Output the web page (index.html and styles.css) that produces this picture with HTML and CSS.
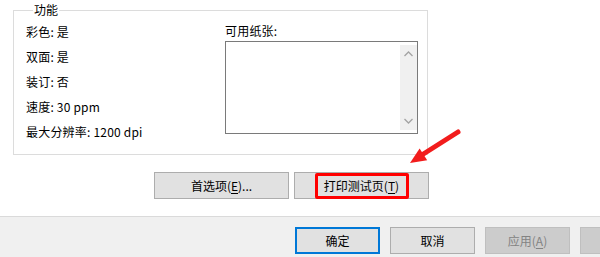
FILE: index.html
```html
<!DOCTYPE html>
<html lang="zh-CN">
<head>
    <meta charset="UTF-8">
    <title>打印机属性</title>
    <link rel="stylesheet" href="styles.css">
</head>
<body>
    <div class="page">
        <div class="content">
            <fieldset class="features">
                <legend>功能</legend>
                <div class="cols">
                    <div class="specs">
                        <div class="row">彩色: 是</div>
                        <div class="row">双面: 是</div>
                        <div class="row">装订: 否</div>
                        <div class="row">速度: 30 ppm</div>
                        <div class="row">最大分辨率: 1200 dpi</div>
                    </div>
                    <div class="paper">
                        <div class="row">可用纸张:</div>
                        <div class="listbox">
                            <div class="scrollbar">
                                <svg width="17" height="12" viewBox="0 0 17 12"><path d="M4.5 8 L8.5 4 L12.5 8" fill="none" stroke="#a3a3a3" stroke-width="1.3"/></svg>
                                <svg width="17" height="12" viewBox="0 0 17 12"><path d="M4.5 4 L8.5 8 L12.5 4" fill="none" stroke="#a3a3a3" stroke-width="1.3"/></svg>
                            </div>
                        </div>
                    </div>
                </div>
            </fieldset>

            <div class="actions">
                <button class="btn wide">首选项(<u>E</u>)...</button>
                <button class="btn wide"><span class="highlight">打印测试页(<u>T</u>)</span></button>
            </div>
        </div>

        <div class="footer">
            <button class="btn default">确定</button>
            <button class="btn">取消</button>
            <button class="btn disabled">应用(<u>A</u>)</button>
            <button class="btn disabled" aria-label="帮助"></button>
        </div>

        <svg class="arrow" width="600" height="257" viewBox="0 0 600 257">
            <line x1="458" y1="132" x2="421" y2="155.5" stroke="#f21c1c" stroke-width="5" stroke-linecap="round"/>
            <polygon points="410,163 419.6,148.4 427.2,160.2" fill="#f21c1c"/>
        </svg>
    </div>
</body>
</html>
```

FILE: styles.css
```css
html, body {
    margin: 0;
    padding: 0;
}

body {
    width: 600px;
    height: 257px;
    overflow: hidden;
    background: #fff;
    font-family: "Noto Sans CJK SC", "Noto Sans", sans-serif;
    font-size: 12px;
    color: #000;
}

.page {
    position: relative;
    width: 600px;
    height: 257px;
    overflow: hidden;
}

.content {
    height: 216px;
    padding: 2px 0 0 13px;
    box-sizing: border-box;
}

.features {
    width: 415px;
    box-sizing: border-box;
    margin: 0;
    padding: 1px 9px 10px 12px;
    border: 1px solid #dcdcdc;
}

.features legend {
    margin-left: 7px;
    padding: 0 1px;
    line-height: 16px;
}

.cols {
    display: grid;
    grid-template-columns: 199px 193px;
}

.row {
    line-height: 25px;
    height: 25px;
    white-space: nowrap;
    letter-spacing: 0.2px;
}

.paper .row {
    height: 22px;
    line-height: 23px;
}

.listbox {
    height: 93px;
    box-sizing: border-box;
    border: 1px solid #7a7a7a;
    display: flex;
    justify-content: flex-end;
    padding: 3px 0 3px 0;
}

.scrollbar {
    width: 17px;
    background: #f0f0f0;
    display: flex;
    flex-direction: column;
    justify-content: space-between;
    padding: 3px 0;
}

.scrollbar svg {
    display: block;
}

.actions {
    display: flex;
    gap: 5px;
    margin: 17px 0 0 141px;
}

.btn {
    flex-shrink: 0;
    height: 27px;
    width: 85px;
    box-sizing: border-box;
    border: 1px solid #adadad;
    background: #e1e1e1;
    font-family: inherit;
    font-size: 12px;
    color: #000;
    padding: 0;
    display: flex;
    align-items: center;
    justify-content: center;
}

.btn u {
    text-underline-offset: 2px;
}

.btn.wide {
    width: 135px;
}

.highlight {
    display: flex;
    align-items: center;
    justify-content: center;
    width: 94px;
    height: 26px;
    box-sizing: border-box;
    border: 3px solid #ff0000;
    border-radius: 2px;
}

.footer {
    width: 700px;
    height: 41px;
    box-sizing: border-box;
    border-top: 1px solid #dadada;
    background: #f0f0f0;
    display: flex;
    gap: 10px;
    padding: 10px 0 0 295px;
}

.btn.default {
    border: 2px solid #0078d7;
}

.btn.disabled {
    background: #cccccc;
    border-color: #bfbfbf;
    color: #838383;
}

.arrow {
    position: absolute;
    left: 0;
    top: 0;
    pointer-events: none;
}
```
